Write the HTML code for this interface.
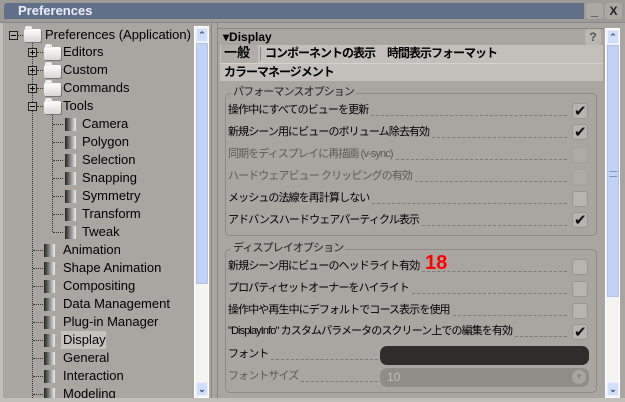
<!DOCTYPE html><html><head><meta charset="utf-8"><style>
*{margin:0;padding:0;box-sizing:border-box}
body{width:625px;height:402px;overflow:hidden;background:#a9a5a1;font-family:Tahoma,"Liberation Sans","Noto Sans CJK JP",sans-serif;font-size:13px;color:#000;position:relative}
.a{position:absolute;white-space:nowrap}
.t{font-size:13px;line-height:16px}
.jp{font-family:"Liberation Sans","Noto Sans CJK JP",sans-serif;font-size:11px;line-height:16px;letter-spacing:-0.9px}
.row{position:absolute;left:228px;width:339px;display:flex;white-space:nowrap;font-family:"Liberation Sans","Noto Sans CJK JP",sans-serif;font-size:11px;line-height:16px;letter-spacing:-0.9px}
.row i{flex:1;border-bottom:1px dashed #807c78;margin:0 0 2px 3px}
.g{color:#5e5a56}
.exp{position:absolute;width:9px;height:9px;border:1px solid #222;background:#b0aca8}
.exp:before{content:"";position:absolute;left:1px;top:3px;width:5px;height:1px;background:#000}
.exp.p:after{content:"";position:absolute;left:3px;top:1px;width:1px;height:5px;background:#000}
.fold{position:absolute;width:17px;height:13px;background:linear-gradient(#fff,#d8d6d4);border-radius:2px;box-shadow:1px 1px 0 #777}
.fold:before{content:"";position:absolute;left:1px;top:-3px;width:7px;height:4px;background:#eee;border-radius:2px 2px 0 0}
.ic{position:absolute;width:11px;height:13px;background:linear-gradient(90deg,#222,#888 50%,#eee)}
.hd{position:absolute;border-top:1px dotted #333;width:10px}
.vd{position:absolute;border-left:1px dotted #333}
.cb{position:absolute;left:572px;width:16px;height:16px;border-radius:3px;background:#b7b3af;border:1px solid #9a9692}
.cb.d{background:#aeaaa6;border-color:#a5a19d}
.ck:after{content:"\2714";position:absolute;left:1px;top:-2px;font-size:15px;color:#111}
.sb{position:absolute;width:15px;background:#f4f4f2;border:1px solid #fff}
.thumb{position:absolute;left:1px;width:12px;background:#c2d2f4;border:1px solid #b2c2e6}
.arr{position:absolute;left:1px;width:12px;height:14px;background:#d2dff8;border:1px solid #eef;color:#33507a;font-size:9px;text-align:center;line-height:13px;font-weight:bold}
.tab{font-family:"Liberation Sans","Noto Sans CJK JP",sans-serif;font-weight:bold;font-size:12px;line-height:16px;letter-spacing:-1px}
</style></head><body>
<div class="a" style="left:0;top:0;width:625px;height:22px;background:#9e9a96"></div>
<div class="a" style="left:4px;top:3px;width:580px;height:16px;background:#5f7088;border-radius:3px 0 0 0"></div>
<div class="a" style="left:18px;top:3px;color:#eef;font-weight:bold;font-size:13px;line-height:16px">Preferences</div>
<div class="a" style="left:586px;top:3px;width:17px;height:16px;background:#aca8a4;border-radius:3px;color:#222;font-weight:bold;text-align:center;line-height:16px">_</div>
<div class="a" style="left:605px;top:3px;width:17px;height:16px;background:#aca8a4;border-radius:3px;color:#222;font-weight:bold;text-align:center;line-height:16px;font-size:12px">X</div>
<div class="a" style="left:0;top:22px;width:625px;height:1px;background:#888"></div>
<div class="a" style="left:0;top:23px;width:3px;height:379px;background:#c2beba"></div>

<div class="vd" style="left:32px;top:42px;height:360px"></div>
<div class="vd" style="left:52px;top:112px;height:120px"></div>
<div class="exp" style="left:9px;top:31px"></div><div class="hd" style="left:18px;top:35px;width:5px"></div>
<div class="fold" style="left:24px;top:29px"></div>
<div class="a t" style="left:45px;top:27px">Preferences (Application)</div>

<div class="exp p" style="left:28px;top:48px"></div><div class="hd" style="left:37px;top:52px;width:6px"></div><div class="fold" style="left:44px;top:47px"></div><div class="a t" style="left:63px;top:44px">Editors</div>
<div class="exp p" style="left:28px;top:66px"></div><div class="hd" style="left:37px;top:70px;width:6px"></div><div class="fold" style="left:44px;top:65px"></div><div class="a t" style="left:63px;top:62px">Custom</div>
<div class="exp p" style="left:28px;top:84px"></div><div class="hd" style="left:37px;top:88px;width:6px"></div><div class="fold" style="left:44px;top:83px"></div><div class="a t" style="left:63px;top:80px">Commands</div>
<div class="exp" style="left:28px;top:102px"></div><div class="hd" style="left:37px;top:106px;width:6px"></div><div class="fold" style="left:44px;top:101px"></div><div class="a t" style="left:63px;top:98px">Tools</div>

<div class="hd" style="left:53px;top:124px"></div><div class="ic" style="left:65px;top:118px"></div><div class="a t" style="left:82px;top:116px">Camera</div>
<div class="hd" style="left:53px;top:142px"></div><div class="ic" style="left:65px;top:136px"></div><div class="a t" style="left:82px;top:134px">Polygon</div>
<div class="hd" style="left:53px;top:160px"></div><div class="ic" style="left:65px;top:154px"></div><div class="a t" style="left:82px;top:152px">Selection</div>
<div class="hd" style="left:53px;top:178px"></div><div class="ic" style="left:65px;top:172px"></div><div class="a t" style="left:82px;top:170px">Snapping</div>
<div class="hd" style="left:53px;top:196px"></div><div class="ic" style="left:65px;top:190px"></div><div class="a t" style="left:82px;top:188px">Symmetry</div>
<div class="hd" style="left:53px;top:214px"></div><div class="ic" style="left:65px;top:208px"></div><div class="a t" style="left:82px;top:206px">Transform</div>
<div class="hd" style="left:53px;top:232px"></div><div class="ic" style="left:65px;top:226px"></div><div class="a t" style="left:82px;top:224px">Tweak</div>

<div class="hd" style="left:33px;top:250px"></div><div class="ic" style="left:44px;top:244px"></div><div class="a t" style="left:63px;top:242px">Animation</div>
<div class="hd" style="left:33px;top:268px"></div><div class="ic" style="left:44px;top:262px"></div><div class="a t" style="left:63px;top:260px">Shape Animation</div>
<div class="hd" style="left:33px;top:286px"></div><div class="ic" style="left:44px;top:280px"></div><div class="a t" style="left:63px;top:278px">Compositing</div>
<div class="hd" style="left:33px;top:304px"></div><div class="ic" style="left:44px;top:298px"></div><div class="a t" style="left:63px;top:296px">Data Management</div>
<div class="hd" style="left:33px;top:322px"></div><div class="ic" style="left:44px;top:316px"></div><div class="a t" style="left:63px;top:314px">Plug-in Manager</div>
<div class="a" style="left:61px;top:331px;width:45px;height:18px;background:#c6c3bf"></div>
<div class="hd" style="left:33px;top:340px"></div><div class="ic" style="left:44px;top:334px"></div><div class="a t" style="left:63px;top:332px">Display</div>
<div class="hd" style="left:33px;top:358px"></div><div class="ic" style="left:44px;top:352px"></div><div class="a t" style="left:63px;top:350px">General</div>
<div class="hd" style="left:33px;top:376px"></div><div class="ic" style="left:44px;top:370px"></div><div class="a t" style="left:63px;top:368px">Interaction</div>
<div class="hd" style="left:33px;top:394px"></div><div class="ic" style="left:44px;top:388px"></div><div class="a t" style="left:63px;top:386px">Modeling</div>
<div class="a" style="left:0;top:398px;width:625px;height:4px;background:#c2beba"></div>

<div class="sb" style="left:194px;top:26px;height:372px">
<div class="arr" style="top:1px">&#8963;</div>
<div class="thumb" style="top:16px;height:241px"></div>
<div class="arr" style="top:355px">&#8964;</div></div>
<div class="a" style="left:211px;top:23px;width:1px;height:375px;background:#8a8682"></div>
<div class="a" style="left:217px;top:23px;width:1px;height:375px;background:#8a8682"></div>

<div class="a" style="left:218px;top:28px;width:386px;height:1px;background:#8a8682"></div>
<div class="a" style="left:223px;top:29px;font-weight:bold;font-size:12px;line-height:16px">&#9662;Display</div>
<div class="a" style="left:585px;top:29px;width:16px;height:16px;background:#bbb7b3;border-radius:3px;text-align:center;font-weight:bold;font-size:12px;line-height:16px;color:#555">?</div>
<div class="a" style="left:220px;top:45px;width:383px;height:36px;background:#c3c0bc"></div>
<div class="a" style="left:221px;top:45px;width:37px;height:18px;background:#b0aca8"></div>
<div class="a tab" style="left:224px;top:45px;font-size:13px;letter-spacing:0">一般</div>
<div class="a" style="left:260px;top:47px;width:1px;height:14px;background:#888"></div>
<div class="a tab" style="left:265px;top:45px">コンポーネントの表示</div>
<div class="a tab" style="left:387px;top:45px">時間表示フォーマット</div>
<div class="a" style="left:220px;top:63px;width:383px;height:1px;background:#d6d3cf"></div>
<div class="a tab" style="left:224px;top:64px">カラーマネージメント</div>

<div class="a" style="left:225px;top:93px;width:372px;height:143px;border:1px solid #8e8a86;border-radius:5px"></div>
<div class="a jp" style="left:231px;top:84px;background:#a9a5a1;padding:0 2px;color:#222">パフォーマンスオプション</div>
<div class="row" style="top:102px"><span>操作中にすべてのビューを更新</span><i></i></div><div class="cb ck" style="top:103px"></div>
<div class="row" style="top:124px"><span>新規シーン用にビューのボリューム除去有効</span><i></i></div><div class="cb ck" style="top:124px"></div>
<div class="row g" style="top:146px"><span>同期をディスプレイに再描画 (v-sync)</span><i></i></div><div class="cb d" style="top:147px"></div>
<div class="row g" style="top:168px"><span>ハードウェアビュー クリッピングの有効</span><i></i></div><div class="cb d" style="top:169px"></div>
<div class="row" style="top:190px"><span>メッシュの法線を再計算しない</span><i></i></div><div class="cb" style="top:191px"></div>
<div class="row" style="top:212px"><span>アドバンスハードウェアパーティクル表示</span><i></i></div><div class="cb ck" style="top:212px"></div>

<div class="a" style="left:225px;top:249px;width:372px;height:144px;border:1px solid #8e8a86;border-radius:5px"></div>
<div class="a jp" style="left:231px;top:240px;background:#a9a5a1;padding:0 2px;color:#222">ディスプレイオプション</div>
<div class="row" style="top:258px"><span>新規シーン用にビューのヘッドライト有効</span><i></i></div><div class="cb" style="top:259px"></div>
<div class="a" style="left:425px;top:252px;color:#f00;font-weight:bold;font-size:20px;line-height:22px;font-family:'Liberation Sans',sans-serif">18</div>
<div class="row" style="top:280px"><span>プロパティセットオーナーをハイライト</span><i></i></div><div class="cb" style="top:281px"></div>
<div class="row" style="top:302px"><span>操作中や再生中にデフォルトでコース表示を使用</span><i></i></div><div class="cb" style="top:303px"></div>
<div class="row" style="top:323px"><span>"DisplayInfo" カスタムパラメータのスクリーン上での編集を有効</span><i></i></div><div class="cb ck" style="top:324px"></div>
<div class="row" style="top:346px;width:150px"><span>フォント</span><i></i></div>
<div class="a" style="left:380px;top:346px;width:209px;height:19px;background:#2f2d2c;border-radius:7px"></div>
<div class="row g" style="top:368px;width:150px"><span>フォントサイズ</span><i></i></div>
<div class="a" style="left:380px;top:368px;width:209px;height:19px;background:#908c88;border-radius:7px"></div>
<div class="a" style="left:387px;top:369px;color:#c0bcb8;font-size:12px;line-height:17px">10</div>
<div class="a" style="left:572px;top:370px;width:14px;height:14px;background:#a8a4a0;border-radius:7px;color:#888;font-size:8px;text-align:center;line-height:14px">&#9660;</div>

<div class="sb" style="left:605px;top:28px;height:370px">
<div class="arr" style="top:1px">&#8963;</div>
<div class="thumb" style="top:16px;height:252px"></div>
<div class="a" style="left:3px;top:142px;width:8px;height:6px;border-top:1px solid #7f94c4;border-bottom:1px solid #7f94c4"></div>
<div class="arr" style="top:353px">&#8964;</div></div>
</body></html>
